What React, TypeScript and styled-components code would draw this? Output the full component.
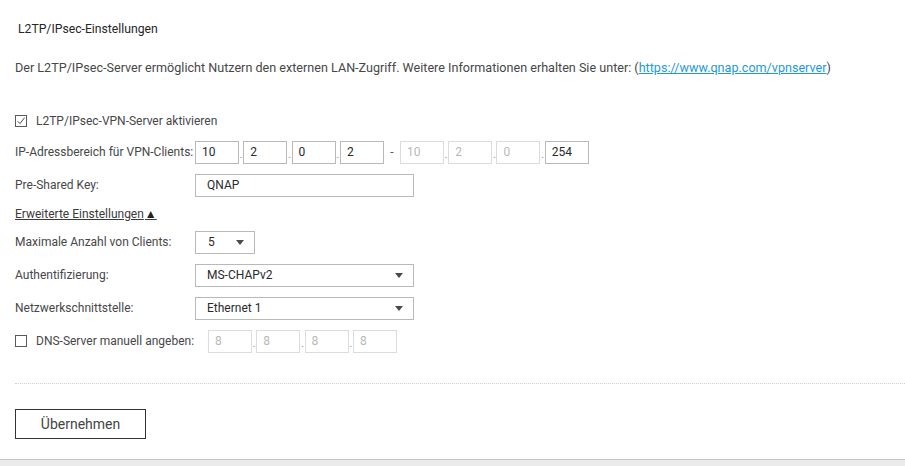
import React from 'react'
import styled, { createGlobalStyle } from 'styled-components'

const GlobalStyle = createGlobalStyle`
  html, body {
    margin: 0;
    padding: 0;
    background: #fff;
  }
  body {
    font-family: Roboto, "Liberation Sans", Arial, sans-serif;
    font-size: 12px;
    color: #474747;
  }
`

const Page = styled.div`
  min-height: 100vh;
  display: flex;
  flex-direction: column;
`

const Content = styled.div`
  padding-left: 15px;
`

const Title = styled.div`
  margin: 21px 0 0 3px;
  line-height: 16px;
  font-size: 12.2px;
  color: #262626;
`

const Description = styled.p`
  margin: 23px 0 0;
  line-height: 16px;
  font-size: 12.6px;
  color: #474747;

  a {
    color: #1d9bd8;
    text-decoration: underline;
  }
`

const Form = styled.div`
  margin-top: 34px;
  display: flex;
  flex-direction: column;
  gap: 9px;
`

const Row = styled.div<{ $height?: number }>`
  display: flex;
  align-items: center;
  height: ${({ $height }) => $height ?? 24}px;
`

const Label = styled.span<{ $width?: number }>`
  flex: 0 0 ${({ $width }) => $width ?? 180}px;
  white-space: nowrap;
  color: #474747;
`

const CheckLabel = styled.label`
  display: flex;
  align-items: center;
  gap: 9px;
  color: #474747;
  white-space: nowrap;
`

const Box = styled.span`
  width: 12px;
  height: 12px;
  box-sizing: border-box;
  border: 1px solid #5a5a5a;
  display: inline-flex;
  align-items: center;
  justify-content: center;
  background: #fff;
`

const Field = styled.div<{ $width: number; $disabled?: boolean; $pad?: number }>`
  box-sizing: border-box;
  width: ${({ $width }) => $width}px;
  height: 23px;
  border: 1px solid ${({ $disabled }) => ($disabled ? '#dcdcdc' : '#b9b9b9')};
  padding-left: ${({ $pad }) => $pad ?? 11}px;
  display: flex;
  align-items: center;
  color: ${({ $disabled }) => ($disabled ? '#b8b8b8' : '#2a2a2a')};
  background: #fff;
`

const Select = styled(Field)`
  justify-content: space-between;
  padding-right: 10px;
  cursor: pointer;
`

const Caret = styled.span`
  width: 0;
  height: 0;
  border-left: 4px solid transparent;
  border-right: 4px solid transparent;
  border-top: 5px solid #4a4a4a;
`

const Dot = styled.span<{ $wide?: boolean }>`
  flex: 0 0 ${({ $wide }) => ($wide ? 5 : 4.3)}px;
  align-self: flex-end;
  text-align: center;
  line-height: 16px;
  padding-bottom: 1px;
  color: #888;
  font-size: 10px;
`

const Dash = styled.span`
  flex: 0 0 16px;
  text-align: center;
  color: #555;
`

const Toggle = styled.span`
  color: #3a3a3a;
  text-decoration: underline;
  cursor: pointer;
  display: inline-flex;
  align-items: center;
`

const Arrow = styled.span`
  font-size: 12px;
  line-height: 12px;
  color: #222;
  margin-left: 1px;
`

const Divider = styled.div`
  margin-top: 30px;
  border-top: 1px dotted #cfcfcf;
`

const Apply = styled.button`
  margin-top: 25px;
  width: 131px;
  height: 30px;
  border: 1px solid #333;
  background: #fff;
  font-family: Roboto, "Liberation Sans", Arial, sans-serif;
  font-size: 14px;
  color: #444;
  cursor: pointer;
`

const Footer = styled.div`
  margin-top: auto;
  height: 6px;
  border-top: 1px solid #c4c4c4;
  background: #ebebeb;
`

const Checkbox = ({ checked }: { checked?: boolean }) => (
  <Box>
    {checked && (
      <svg width="10" height="10" viewBox="0 0 10 10">
        <path d="M1.6 5.2 L4 7.6 L8.6 1.6" fill="none" stroke="#4a4a4a" strokeWidth="1" />
      </svg>
    )}
  </Box>
)

const IpGroup = ({ parts, disabled, width = 44 }: { parts: string[]; disabled?: boolean[]; width?: number }) => (
  <>
    {parts.map((p, i) => (
      <React.Fragment key={i}>
        {i > 0 && <Dot $wide={width > 44}>.</Dot>}
        <Field $width={width} $pad={6} $disabled={disabled?.[i]}>
          {p}
        </Field>
      </React.Fragment>
    ))}
  </>
)

export default function App() {
  return (
    <Page>
      <GlobalStyle />
      <Content>
        <Title>L2TP/IPsec-Einstellungen</Title>
        <Description>
          Der L2TP/IPsec-Server ermöglicht Nutzern den externen LAN-Zugriff. Weitere Informationen erhalten Sie unter: (
          <a href="#">https://www.qnap.com/vpnserver</a>)
        </Description>

        <Form>
          <Row $height={21}>
            <CheckLabel>
              <Checkbox checked />
              L2TP/IPsec-VPN-Server aktivieren
            </CheckLabel>
          </Row>

          <Row>
            <Label>IP-Adressbereich für VPN-Clients:</Label>
            <IpGroup parts={['10', '2', '0', '2']} />
            <Dash>-</Dash>
            <IpGroup parts={['10', '2', '0', '254']} disabled={[true, true, true, false]} />
          </Row>

          <Row>
            <Label>Pre-Shared Key:</Label>
            <Field $width={219}>QNAP</Field>
          </Row>

          <Row $height={15}>
            <Toggle>
              Erweiterte Einstellungen<Arrow>▲</Arrow>
            </Toggle>
          </Row>

          <Row>
            <Label>Maximale Anzahl von Clients:</Label>
            <Select $width={60} $pad={12}>
              5
              <Caret />
            </Select>
          </Row>

          <Row>
            <Label>Authentifizierung:</Label>
            <Select $width={219}>
              MS-CHAPv2
              <Caret />
            </Select>
          </Row>

          <Row>
            <Label>Netzwerkschnittstelle:</Label>
            <Select $width={219}>
              Ethernet 1
              <Caret />
            </Select>
          </Row>

          <Row>
            <Label $width={193}>
              <CheckLabel>
                <Checkbox />
                DNS-Server manuell angeben:
              </CheckLabel>
            </Label>
            <IpGroup parts={['8', '8', '8', '8']} disabled={[true, true, true, true]} width={44} />
          </Row>
        </Form>

        <Divider />
        <Apply>Übernehmen</Apply>
      </Content>
      <Footer />
    </Page>
  )
}
